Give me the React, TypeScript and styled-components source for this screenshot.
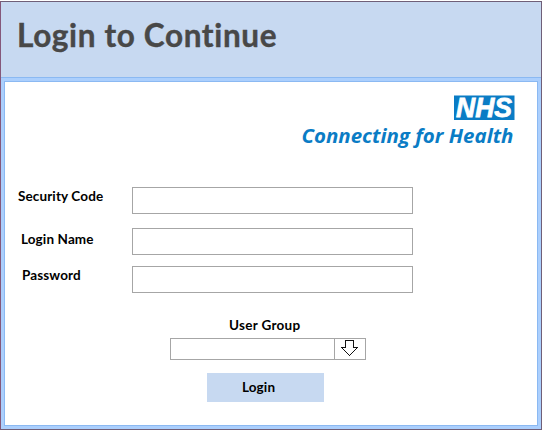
import React from 'react';
import styled, { createGlobalStyle } from 'styled-components';

const GlobalStyle = createGlobalStyle`
  *, *::before, *::after { box-sizing: border-box; }
  body { margin: 0; background: #fff; overflow: hidden; }
`;

const Window = styled.main`
  width: 542px;
  height: 429px;
  margin-top: 1px;
  display: flex;
  flex-direction: column;
  border: 1px solid #6f5f78;
  border-left-color: #85587a;
  background: #abcffd;
  font-family: Lato, Carlito, 'Liberation Sans', sans-serif;
  font-weight: 700;
`;

const Header = styled.header`
  height: 76px;
  flex: none;
  padding: 12px 0 0 16px;
  background: #c7d9f1;
  border-bottom: 1px solid #8bb9f2;
`;

const Title = styled.h1`
  margin: 0;
  font-size: 31.5px;
  line-height: 42px;
  letter-spacing: 0.65px;
  color: #484848;
  -webkit-text-stroke: 0.4px #484848;
  white-space: nowrap;
`;

const Panel = styled.section`
  flex: 1;
  margin: 3px;
  display: flex;
  flex-direction: column;
  border: 1px solid #8bb9f2;
  background: #fff;
`;

const LogoRow = styled.div`
  display: flex;
  justify-content: flex-end;
  height: 105px;
  padding: 10px 20px 0 0;
`;

const Form = styled.form`
  display: flex;
  flex-direction: column;
`;

const FieldRow = styled.div<{ $indent: number; $gap: number }>`
  display: grid;
  grid-template-columns: ${p => 127 - p.$indent}px 281px;
  height: 27px;
  margin-bottom: ${p => p.$gap}px;
  padding-left: ${p => p.$indent}px;
`;

const Label = styled.label<{ $shift?: number }>`
  padding-top: ${p => p.$shift ?? 0}px;
  font-size: 13.5px;
  line-height: 18px;
  letter-spacing: 0.12px;
  white-space: nowrap;
  color: #000;
`;

const Input = styled.input`
  width: 100%;
  height: 27px;
  padding: 0 5px;
  border: 1px solid #a6a6a6;
  border-radius: 0;
  outline: none;
  background: #fff;
  font: inherit;
`;

const GroupField = styled.div`
  display: flex;
  flex-direction: column;
  width: 196px;
  margin: 23px 0 0 165px;
`;

const GroupLabel = styled(Label)`
  height: 22px;
  padding-left: 59px;
  letter-spacing: 0.3px;
`;

const Combo = styled.div`
  display: flex;
  height: 22px;
  border: 1px solid #a6a6a6;
`;

const ComboValue = styled.div`
  width: 163px;
`;

const ComboButton = styled.button`
  flex: 1;
  padding: 0;
  border: 0;
  border-left: 1px solid #a6a6a6;
  background: #fff;
  display: flex;
`;

const ArrowIcon = styled.svg`
  display: block;
  margin: 1px 0 0 6px;
`;

const LoginButton = styled.button`
  width: 117px;
  height: 29px;
  margin: 13px 0 0 202px;
  padding: 0 0 1px 35px;
  border: 0;
  background: #c7d9f1;
  color: #000;
  font: inherit;
  font-size: 13.5px;
  letter-spacing: 0.12px;
  text-align: left;
`;

const LogoMark = styled.svg`
  display: block;
  overflow: visible;
`;

function Logo() {
  return (
    <LogoMark width="216" height="60" viewBox="0 0 216 60" role="img" aria-label="NHS Connecting for Health">
      <rect x="153" y="3.5" width="60.5" height="24.5" fill="#0a7cc5" />
      <text x="155" y="25.3" fontFamily="'Liberation Sans', Arial, sans-serif" fontStyle="italic" fontSize="27" fontWeight="700" fill="#fff" stroke="#fff" strokeWidth="0.8" textLength="56" lengthAdjust="spacingAndGlyphs">NHS</text>
      <text x="0.5" y="51" fontFamily="'Open Sans', 'Noto Sans', sans-serif" fontStyle="italic" fontSize="20" fontWeight="700" fill="#0a7cc5" textLength="212" lengthAdjust="spacingAndGlyphs">Connecting for Health</text>
    </LogoMark>
  );
}

const fields = [
  { id: 'code', label: 'Security Code', indent: 13, gap: 14, shift: 0, type: 'text' },
  { id: 'name', label: 'Login Name', indent: 16, gap: 11, shift: 2, type: 'text' },
  { id: 'password', label: 'Password', indent: 17, gap: 0, shift: 0, type: 'password' },
];

export default function App() {
  return (
    <>
      <GlobalStyle />
      <Window>
        <Header>
          <Title>Login to Continue</Title>
        </Header>
        <Panel>
          <LogoRow>
            <Logo />
          </LogoRow>
          <Form>
            {fields.map(f => (
              <FieldRow key={f.id} $indent={f.indent} $gap={f.gap}>
                <Label htmlFor={f.id} $shift={f.shift}>{f.label}</Label>
                <Input id={f.id} type={f.type} />
              </FieldRow>
            ))}
            <GroupField>
              <GroupLabel>User Group</GroupLabel>
              <Combo>
                <ComboValue />
                <ComboButton type="button" aria-label="Choose user group">
                  <ArrowIcon width="17" height="16" viewBox="0 0 17 16" fill="none" stroke="#111" shapeRendering="crispEdges">
                    <path d="M0.5 7.5H4.5V0.5H12.5V7.5H16.5L8.5 15.5Z" />
                  </ArrowIcon>
                </ComboButton>
              </Combo>
            </GroupField>
            <LoginButton type="button">Login</LoginButton>
          </Form>
        </Panel>
      </Window>
    </>
  );
}
